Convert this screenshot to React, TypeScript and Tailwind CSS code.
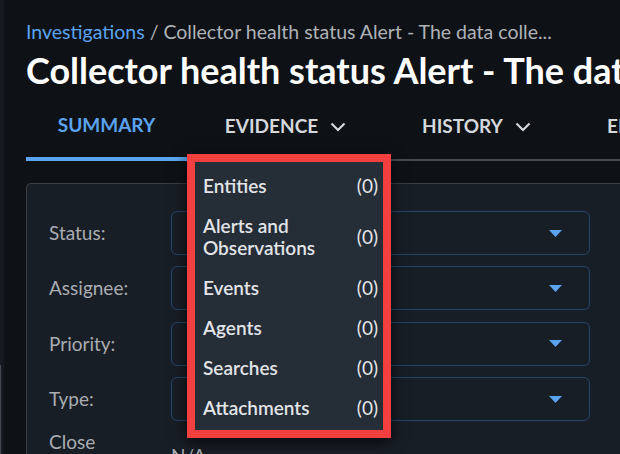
const fields = ['Status:', 'Assignee:', 'Priority:', 'Type:'];

const evidenceItems = [
  { label: 'Entities', count: 0 },
  { label: 'Alerts and Observations', count: 0 },
  { label: 'Events', count: 0 },
  { label: 'Agents', count: 0 },
  { label: 'Searches', count: 0 },
  { label: 'Attachments', count: 0 },
];

function Chevron() {
  return (
    <svg width="16" height="10" viewBox="0 0 16 10" className="ml-[12px]">
      <polyline points="1.5,1.5 8,8 14.5,1.5" fill="none" stroke="currentColor" strokeWidth="2.2" />
    </svg>
  );
}

function Caret() {
  return (
    <svg width="13" height="7" viewBox="0 0 13 7">
      <polygon points="0,0 13,0 6.5,7" fill="#5ba3ee" />
    </svg>
  );
}

function App() {
  return (
    <div className="relative flex h-[454px] w-[620px] overflow-hidden bg-[#0e1217] font-['Lato','Noto_Sans',sans-serif]">
      <div className="flex w-[4px] shrink-0 flex-col bg-[#161a20]">
        <div className="h-[365px]" />
        <div className="w-px flex-1 bg-[#444a52]" />
      </div>

      <div className="flex min-w-0 flex-1 flex-col overflow-hidden pl-[22px]">
        <div className="mt-[20px] shrink-0 whitespace-nowrap text-[19.5px] leading-[24px] text-[#aeb2b7]">
          <span className="text-[#5ba3ee]">Investigations</span> / Collector health status Alert - The data colle...
        </div>
        <div className="mt-[4px] shrink-0 whitespace-nowrap text-[36px] leading-[44px] font-bold text-white">
          Collector health status Alert - The data collector is not healthy
        </div>

        <div className="flex h-[69px] shrink-0 items-stretch border-b-2 border-[#474c53] text-[19px] font-bold whitespace-nowrap">
          <div className="-mb-[2px] flex w-[161px] shrink-0 items-center justify-center border-b-[4px] border-[#5ba3ee] pt-[2px] text-[#5ba3ee]">
            SUMMARY
          </div>
          <div className="flex w-[197px] shrink-0 items-center justify-center pt-[2px] text-[#d4d7db]">
            EVIDENCE
            <Chevron />
          </div>
          <div className="flex w-[185px] shrink-0 items-center justify-center pt-[2px] text-[#d4d7db]">
            HISTORY
            <Chevron />
          </div>
          <div className="flex shrink-0 items-center pt-[2px] pl-[38px] text-[#d4d7db]">ENRICHMENT</div>
        </div>

        <div className="mt-[22px] flex flex-1 flex-col gap-[11.4px] rounded-tl-[5px] border-t border-l border-[#383e46] bg-[#181e26] pt-[27px] pl-[22px] pr-[30px]">
          {fields.map((label) => (
            <div key={label} className="flex shrink-0 items-center">
              <div className="w-[122px] text-[19px] text-[#a9adb2]">{label}</div>
              <div className="flex h-[44px] flex-1 items-center justify-end rounded-[6px] border border-[#284566] pr-[27px]">
                <Caret />
              </div>
            </div>
          ))}
          <div className="-mt-[3px] flex shrink-0">
            <div className="w-[122px] text-[19px] leading-[24px] text-[#a9adb2]">
              Close
              <br />
              Reason:
            </div>
            <div className="pt-[12px] text-[19px] text-[#a9adb2]">N/A</div>
          </div>
        </div>
      </div>

      <div className="absolute top-[154px] left-[187px] w-[204px] border-8 border-[#f1403f] bg-[#252d37] pt-[4px] pr-[5px] pb-[2px] pl-[8px] shadow-[0_4px_14px_rgba(0,0,0,0.7)]">
        {evidenceItems.map(({ label, count }) => (
          <div key={label} className="flex items-center justify-between py-[9px] text-[19px] leading-[22px] font-semibold text-[#e2e4e7]">
            <div className="w-[130px]">{label}</div>
            <div className="font-normal">({count})</div>
          </div>
        ))}
      </div>
    </div>
  );
}

export default App;
